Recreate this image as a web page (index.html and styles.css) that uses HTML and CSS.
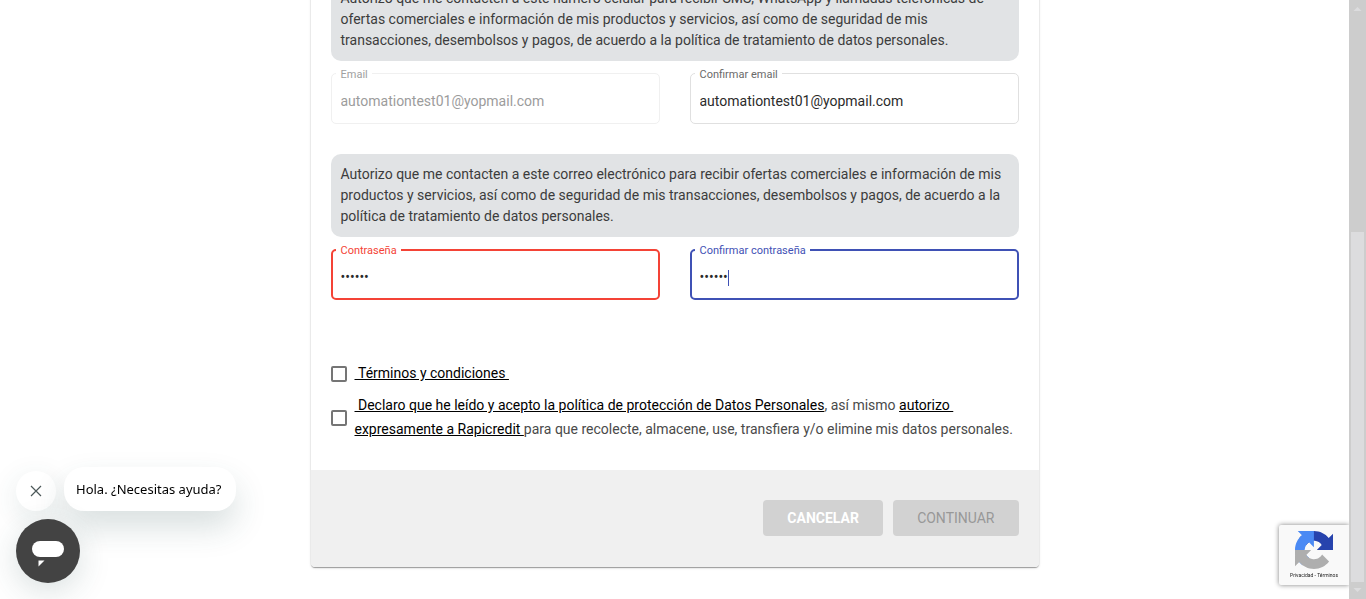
FILE: index.html
```html
<!DOCTYPE html>
<html lang="es">
<head>
<meta charset="utf-8">
<title>Registro</title>
<link rel="stylesheet" href="styles.css">
</head>
<body>
<div class="viewport">
  <main class="page">
    <form class="card">
      <div class="card-body">
        <p class="consent">Autorizo que me contacten a este número celular para recibir SMS, WhatsApp y llamadas telefónicas de ofertas comerciales e información de mis productos y servicios, así como de seguridad de mis transacciones, desembolsos y pagos, de acuerdo a la política de tratamiento de datos personales.</p>
        <div class="fields">
          <div class="field field-disabled">
            <input class="field-input" id="email" type="email" value="automationtest01@yopmail.com" disabled>
            <label class="field-label" for="email">Email</label>
          </div>
          <div class="field">
            <input class="field-input" id="email2" type="email" value="automationtest01@yopmail.com">
            <label class="field-label" for="email2">Confirmar email</label>
          </div>
        </div>
        <p class="consent consent-email">Autorizo que me contacten a este correo electrónico para recibir ofertas comerciales e información de mis productos y servicios, así como de seguridad de mis transacciones, desembolsos y pagos, de acuerdo a la política de tratamiento de datos personales.</p>
        <div class="fields">
          <div class="field field-error">
            <input class="field-input" id="pass" type="password" value="123456">
            <label class="field-label" for="pass">Contraseña</label>
          </div>
          <div class="field field-active">
            <input class="field-input" id="pass2" type="password" value="123456">
            <label class="field-label" for="pass2">Confirmar contraseña</label>
            <span class="caret"></span>
          </div>
        </div>
        <div class="terms">
          <div class="term">
            <input class="check" type="checkbox" id="terms">
            <label class="term-text" for="terms"><a href="#terminos">&nbsp;Términos y condiciones&nbsp;</a></label>
          </div>
          <div class="term">
            <input class="check" type="checkbox" id="privacy">
            <label class="term-text" for="privacy"><a href="#politica">&nbsp;Declaro que he leído y acepto la política de protección de Datos Personales</a>, así mismo <a href="#autorizo">autorizo&nbsp;<br>expresamente a Rapicredit </a>para que recolecte, almacene, use, transfiera y/o elimine mis datos personales.</label>
          </div>
        </div>
      </div>
      <div class="card-footer">
        <button class="btn btn-cancel" type="button">CANCELAR</button>
        <button class="btn btn-next" type="submit" disabled>CONTINUAR</button>
      </div>
    </form>
  </main>
  <div class="scrollbar" aria-hidden="true">
    <svg class="arrow" viewBox="0 0 17 17"><path d="M4.500 11h8L8.500 7z"/></svg>
    <div class="track"><div class="thumb"></div></div>
    <svg class="arrow" viewBox="0 0 17 17"><path d="M4.500 6h8L8.500 10z"/></svg>
  </div>
</div>

<div class="chat">
  <div class="chat-row">
    <button class="chat-close" type="button" aria-label="Cerrar">
      <svg width="12" height="12" viewBox="0 0 12 12"><path d="M1 1l10 10M11 1L1 11" fill="none" stroke="#4c5859" stroke-width="1.200"/></svg>
    </button>
    <div class="chat-bubble">Hola. ¿Necesitas ayuda?</div>
  </div>
  <button class="chat-launcher" type="button" aria-label="Abrir chat">
    <svg width="32" height="26" viewBox="0 0 32 26"><rect width="32" height="16" rx="8" fill="#fff"/><path d="M6.500 19.500h6l-6 6z" fill="#fff"/></svg>
  </button>
</div>

<div class="recaptcha">
  <svg width="38" height="38" viewBox="0 0 64 64">
    <path fill="#1c3aa9" d="M64 31.955l-.033-1.370V4.687l-7.160 7.160C50.948 4.674 42.033.093 32.050.093c-10.400 0-19.622 4.960-25.458 12.640l11.736 11.860a15.550 15.550 0 0 1 4.754-5.334c2.050-1.600 4.952-2.906 8.968-2.906.485 0 .860.057 1.135.163 4.976.393 9.288 3.140 11.828 7.124l-8.307 8.307L64 31.953"/>
    <path fill="#4285f4" d="M31.862.094l-1.370.033H4.594l7.160 7.160C4.580 13.147 0 22.060 0 32.046c0 10.400 4.960 19.622 12.640 25.458L24.500 45.768a15.550 15.550 0 0 1-5.334-4.754c-1.600-2.050-2.906-4.952-2.906-8.968 0-.485.057-.860.163-1.135.393-4.976 3.140-9.288 7.124-11.828l8.307 8.307L31.860.095"/>
    <path fill="#ababab" d="M.001 32.045l.033 1.370v25.898l7.160-7.160c5.860 7.173 14.774 11.754 24.760 11.754 10.400 0 19.622-4.960 25.458-12.640l-11.736-11.860a15.550 15.550 0 0 1-4.754 5.334c-2.050 1.600-4.952 2.906-8.968 2.906-.485 0-.860-.057-1.135-.163-4.976-.393-9.288-3.140-11.828-7.124l8.307-8.307c-10.522.040-22.400.066-27.295-.005"/>
  </svg>
  <div class="recaptcha-links"><a href="#privacidad">Privacidad</a> - <a href="#condiciones">Términos</a></div>
</div>
</body>
</html>
```
FILE: styles.css
```css
* { box-sizing: border-box; }

body {
  margin: 0;
  background: #fff;
  color: #3c3c3c;
  font: 14px/21px Roboto, "Liberation Sans", sans-serif;
}

.viewport {
  display: grid;
  grid-template-columns: 1fr 17px;
  height: 100vh;
  overflow: hidden;
}

.page {
  display: flex;
  flex-direction: column;
  justify-content: flex-end;
  min-height: 0;
  padding: 0 16px 32px;
}

.card {
  flex: none;
  width: 100%;
  max-width: 728px;
  margin: 0 auto;
  border-radius: 4px;
  background: #fff;
  box-shadow: 0 2px 1px -1px rgba(0, 0, 0, .2), 0 1px 1px rgba(0, 0, 0, .14), 0 1px 3px rgba(0, 0, 0, .12), 0 0 1px rgba(0, 0, 0, .3);
}

.card-body { padding: 20px 20px 29px; }

.consent {
  margin: 0 0 12px;
  padding: 10px;
  border-radius: 10px;
  background: #e1e3e5;
}

.consent-email { margin-top: 30px; }

.fields {
  display: grid;
  grid-template-columns: 1fr 1fr;
  gap: 30px;
}

.field {
  --line: #e0e0e0;
  --label: #6a6a6a;
  position: relative;
}

.field-input {
  display: block;
  width: 100%;
  height: 51px;
  padding: 4px 9px 0;
  border: 1px solid var(--line);
  border-radius: 5px;
  outline: none;
  background: #fff;
  color: #2b2b2b;
  font: inherit;
}

.field-label {
  position: absolute;
  top: -4px;
  left: 5px;
  padding: 0 4px 0 5px;
  background: #fff;
  color: var(--label);
  font-size: 11px;
  line-height: 12px;
}

.field-disabled { --line: #f0f0f0; --label: #a0a0a0; }
.field-disabled .field-input { color: #9c9c9c; }
.field-error { --line: #f44336; --label: #f44336; }
.field-active { --line: #3f51b5; --label: #3f51b5; }

.field-error .field-input,
.field-active .field-input {
  padding: 4px 8px 0;
  border-width: 2px;
}

.caret {
  position: absolute;
  top: 21px;
  left: 38px;
  width: 1px;
  height: 16px;
  background: #3f51b5;
}

.terms {
  display: grid;
  gap: 8px;
  margin-top: 61px;
  line-height: 24px;
}

.term {
  display: flex;
  align-items: center;
  gap: 8px;
}

.check {
  flex: none;
  appearance: none;
  width: 16px;
  height: 16px;
  margin: 2px 0 0;
  border: 2px solid #757575;
  border-radius: 2px;
}

.term-text { color: #4a4a4a; }
.term-text a { color: #000; }

.card-footer {
  display: flex;
  justify-content: flex-end;
  gap: 10px;
  padding: 30px 20px 31px;
  border-radius: 0 0 4px 4px;
  background: #f0f0f0;
}

.btn {
  min-width: 120px;
  height: 36px;
  padding: 0 24px;
  border: 0;
  border-radius: 4px;
  background: #d2d2d2;
  font: 400 14px/34px Roboto, "Liberation Sans", sans-serif;
}

.btn-cancel { color: #fff; font-weight: 700; }
.btn-next { color: #989898; }

.scrollbar {
  display: flex;
  flex-direction: column;
  background: #cdcdcd;
}

.arrow { width: 17px; height: 17px; fill: #dcdcde; }

.track {
  display: flex;
  flex: 1;
  align-items: flex-end;
  padding: 0 2px;
}

.thumb {
  width: 100%;
  height: 62%;
  background: #dcdcde;
}

.chat {
  position: fixed;
  bottom: 16px;
  left: 16px;
  display: grid;
  gap: 8px;
}

.chat-row {
  display: flex;
  align-items: flex-end;
  gap: 8px;
}

.chat button {
  display: grid;
  place-items: center;
  padding: 0;
  border: 0;
  border-radius: 50%;
}

.chat .chat-close {
  width: 40px;
  height: 40px;
  background: #fff;
  box-shadow: 0 8px 30px rgba(40, 80, 80, .12);
}

.chat-bubble {
  min-width: 172px;
  padding: 12px;
  border-radius: 20px;
  background: #fff;
  box-shadow: 0 16px 32px rgba(40, 80, 80, .18);
  color: #000;
  font: 13px/20px "Noto Sans", "Open Sans", sans-serif;
}

.chat .chat-launcher {
  width: 64px;
  height: 64px;
  padding-top: 6px;
  background: #434343;
  box-shadow: 0 8px 32px rgba(40, 80, 80, .18);
}

.recaptcha {
  position: fixed;
  right: 17px;
  bottom: 14px;
  width: 70px;
  height: 60px;
  padding-top: 6px;
  border-radius: 2px 0 0 2px;
  background: #f9f9f9;
  box-shadow: 0 0 5px #808080;
  clip-path: inset(-8px 0 -8px -8px);
  text-align: center;
}

.recaptcha svg { display: block; margin: 0 auto; opacity: .95; }

.recaptcha-links {
  color: #222;
  font-size: 5px;
  line-height: 12px;
}

.recaptcha-links a { color: inherit; text-decoration: none; }
```
